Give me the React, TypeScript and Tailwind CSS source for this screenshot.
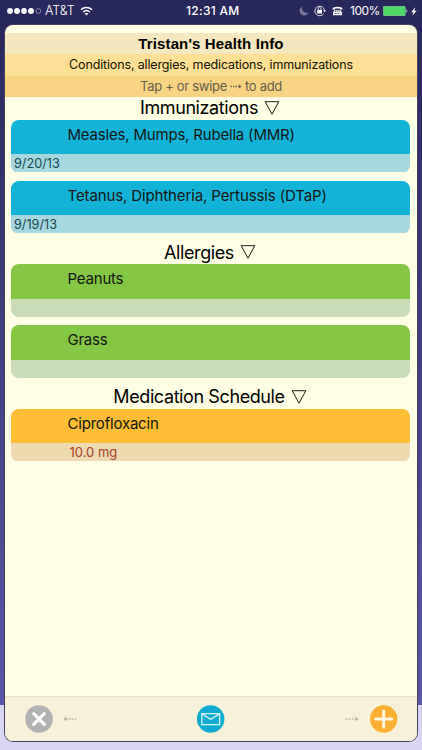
interface Entry {
  title: string
  detail?: string
  titleClass: string
  detailClass?: string
}

interface Section {
  name: string
  bar: string
  footer: string
  entries: Entry[]
}

const SECTIONS: Section[] = [
  {
    name: 'Immunizations',
    bar: 'bg-[#13b3d8]',
    footer: 'bg-[#a6d7e0]',
    entries: [
      { title: 'Measles, Mumps, Rubella (MMR)', detail: '9/20/13', titleClass: 'tracking-[-0.19px]' },
      { title: 'Tetanus, Diphtheria, Pertussis (DTaP)', detail: '9/19/13', titleClass: 'tracking-[-0.12px]' },
    ],
  },
  {
    name: 'Allergies',
    bar: 'bg-[#84c745]',
    footer: 'bg-[#c8ddb5]',
    entries: [
      { title: 'Peanuts', titleClass: 'tracking-[-0.2px]' },
      { title: 'Grass', titleClass: 'tracking-[-0.25px]' },
    ],
  },
  {
    name: 'Medication Schedule',
    bar: 'bg-[#ffbe34]',
    footer: 'bg-[#eed9b0]',
    entries: [
      {
        title: 'Ciprofloxacin',
        detail: '10.0 mg',
        titleClass: 'tracking-[-0.2px]',
        detailClass: 'pl-[59px] text-[13px] text-[#a9402a]',
      },
    ],
  },
]

function StatusBar() {
  return (
    <div className="flex h-[25px] items-center pb-[3px] pl-[7px] pr-[5px] text-[12px] text-white">
      <div className="flex w-[179px] items-center">
        <svg width="35" height="8" viewBox="0 0 35 8" fill="white">
          <circle cx="3" cy="4" r="2.9" />
          <circle cx="10" cy="4" r="2.9" />
          <circle cx="17" cy="4" r="2.9" />
          <circle cx="24" cy="4" r="2.9" />
          <circle cx="31.3" cy="4" r="2.4" fill="none" stroke="#a9a9c9" strokeWidth="0.7" />
        </svg>
        <span className="ml-[3px] w-[30px] whitespace-nowrap text-[12.5px] font-light tracking-[-0.1px]">AT&amp;T</span>
        <svg className="ml-[5px]" width="13" height="10" viewBox="0 0 14 10" fill="none" stroke="white" strokeWidth="1.6">
          <path d="M1 3.6C4.4 0.4 9.6 0.4 13 3.6" />
          <path d="M3.4 6C5.5 4.1 8.5 4.1 10.6 6" />
          <path d="M7 9.8L4.9 7.7C6.1 6.7 7.9 6.7 9.1 7.7Z" fill="white" stroke="none" />
        </svg>
      </div>
      <span className="w-[60px] whitespace-nowrap font-medium tracking-[0.3px]">12:31 AM</span>
      <div className="ml-auto flex items-center">
        <svg width="10" height="10" viewBox="0 0 10 10" fill="#77769d">
          <path d="M3.2 0.4A4.8 4.8 0 1 0 9.7 6.7A5 5 0 0 1 3.2 0.4Z" />
        </svg>
        <svg className="ml-[5px]" width="12" height="12" viewBox="0 0 12 12" fill="none" stroke="white" strokeWidth="0.8">
          <path d="M9.7 8.7A4.8 4.8 0 1 1 10.5 5.5" />
          <path d="M9.2 5.2H12L10.6 7.3Z" fill="white" stroke="none" />
          <rect x="3.2" y="5" width="4.8" height="3.5" fill="white" stroke="none" />
          <path d="M4.2 5V3.9A1.4 1.4 0 0 1 7 3.9V5" />
        </svg>
        <svg className="ml-[6px]" width="11" height="10" viewBox="0 0 11 10" fill="white">
          <path d="M0.3 3.6C0.5 1.5 2.5 0.8 5.5 0.8S10.5 1.5 10.7 3.6H7.9V2.6H3.1V3.6Z" />
          <path d="M2.6 4.2H8.4L9.9 6V9.2H1.1V6Z" />
          <path d="M3 5.6H8M2.6 7.5H8.4" stroke="#28285c" strokeWidth="0.9" strokeDasharray="1 0.8" />
        </svg>
        <span className="ml-[7px] w-[31px] whitespace-nowrap tracking-[-0.5px]">100%</span>
        <svg className="ml-[2px]" width="25" height="10" viewBox="0 0 25 10">
          <rect x="0.3" y="0.3" width="22" height="9.4" rx="1" fill="#4cd964" stroke="#a7d8bd" strokeWidth="0.5" />
          <path d="M23.3 3.2C24.7 3.8 24.7 6.2 23.3 6.8Z" fill="#cfcfe0" />
        </svg>
        <svg className="ml-[3px]" width="6" height="9" viewBox="0 0 7 10" fill="white">
          <path d="M4.9 0L0.2 5.8H2.7L1.5 10L6.7 4.1H3.9Z" />
        </svg>
      </div>
    </div>
  )
}

function DottedArrow({ className }: { className?: string }) {
  return (
    <svg className={className} width="14" height="6" viewBox="0 0 14 6" fill="currentColor">
      <rect x="0.5" y="2.2" width="1.7" height="1.6" />
      <rect x="3.5" y="2.2" width="1.7" height="1.6" />
      <rect x="6.5" y="2.2" width="1.7" height="1.6" />
      <path d="M9.5 2.2H10.8L10.2 0.2L13.8 3L10.2 5.8L10.8 3.8H9.5Z" />
    </svg>
  )
}

function EntryCard({ entry, section }: { entry: Entry; section: Section }) {
  return (
    <div className="h-[53px] overflow-hidden rounded-[8px]">
      <div className={`h-[34.7px] pl-[57px] pt-[5px] text-[15px] leading-[20px] text-[#101510] ${section.bar}`}>
        <span className={`whitespace-nowrap ${entry.titleClass}`}>{entry.title}</span>
      </div>
      <div className={`h-[18.3px] leading-[19px] ${section.footer} ${entry.detailClass ?? 'pl-[3.5px] text-[12.7px] text-[#174550]'}`}>
        {entry.detail}
      </div>
    </div>
  )
}

export default function App() {
  return (
    <div className="h-[750px] w-[422px] overflow-hidden bg-[linear-gradient(#28285c_0px,#28285c_30px,#5a57ab_705px,#d9d6f5_705px)] font-['Inter','Liberation_Sans',sans-serif]">
      <StatusBar />
      <div className="mx-[5px] flex h-[716px] flex-col overflow-hidden rounded-[8px] bg-[#ffffe6] pt-[8px] shadow-[0_0_0_1px_#44415f]">
        <div className="h-[21px] shrink-0 bg-[#f6e8be] text-center font-['Liberation_Sans',Arial,sans-serif] text-[15px] font-bold leading-[22px] tracking-[0.12px] text-black">
          Tristan's Health Info
        </div>
        <div className="h-[22px] shrink-0 bg-[#ffe094] text-center text-[12.5px] leading-[22px] tracking-[-0.15px] text-[#151000]">
          Conditions, allergies, medications, immunizations
        </div>
        <div className="flex h-[21px] shrink-0 items-center justify-center bg-[#f9d384] text-[13px] tracking-[-0.3px] text-[#665d4b]">
          <span>Tap + or swipe</span>
          <DottedArrow className="mx-[3px] h-[5px] w-[12px]" />
          <span>to add</span>
        </div>

        <div className="pl-[5.5px] pr-[7.5px]">
          {SECTIONS.map((section) => (
            <section key={section.name} className="mb-[8px]">
              <h2 className="flex h-[22.5px] items-center justify-center gap-[6px] text-[18px] leading-[22px] tracking-[-0.4px] text-black">
                <span>{section.name}</span>
                <svg className="mb-[1px]" width="16" height="14" viewBox="0 0 16 14" fill="none" stroke="black" strokeWidth="0.9">
                  <path d="M1.2 0.7H14.8L8 13.2Z" />
                </svg>
              </h2>
              <div className="flex flex-col gap-[8px]">
                {section.entries.map((entry) => (
                  <EntryCard key={entry.title} entry={entry} section={section} />
                ))}
              </div>
            </section>
          ))}
        </div>

        <div className="mt-auto flex h-[45px] items-center border-t border-[#e8dfc5] bg-[#f8f1d9] px-[19.5px] text-[#bbb8a7]">
          <svg width="28" height="28" viewBox="0 0 28 28">
            <circle cx="14" cy="14" r="13.8" fill="#b1b1b1" />
            <path d="M8.7 8.7L19.3 19.3M19.3 8.7L8.7 19.3" stroke="#fafafa" strokeWidth="3.2" strokeLinecap="round" />
          </svg>
          <DottedArrow className="ml-[10px] rotate-180" />
          <svg className="mx-auto" width="28" height="28" viewBox="0 0 28 28" fill="none">
            <circle cx="13.6" cy="14" r="13.8" fill="#0dabd0" />
            <path d="M4.8 8.6H22.6V19.6H4.8Z M5.2 9L13.7 14.4L22.2 9" stroke="#d9f4f7" strokeWidth="1.3" />
          </svg>
          <DottedArrow className="mr-[11px]" />
          <svg width="28" height="28" viewBox="0 0 28 28">
            <circle cx="13.7" cy="14" r="13.7" fill="#ffb032" />
            <path d="M13.7 6V22M5.7 14H21.7" stroke="#fff8e3" strokeWidth="3" strokeLinecap="round" />
          </svg>
        </div>
      </div>
    </div>
  )
}
